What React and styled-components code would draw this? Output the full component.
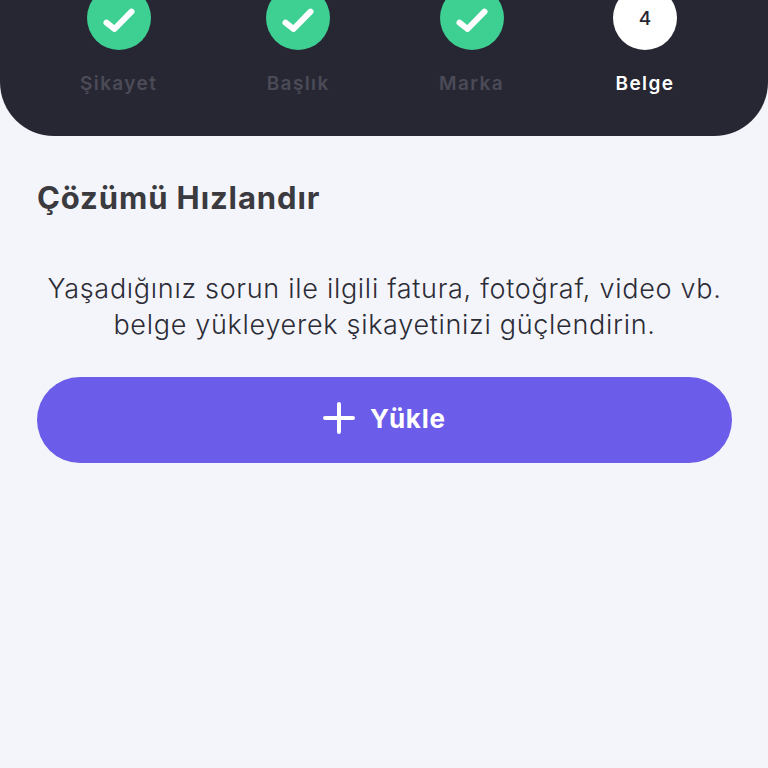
import React from 'react'
import styled, {createGlobalStyle} from 'styled-components'

const GlobalStyle = createGlobalStyle`
    html, body {
        margin: 0;
        padding: 0;
        background: #f4f5fa;
        font-family: 'Inter', 'Liberation Sans', sans-serif;
    }
`

const Page = styled.div`
    width: 768px;
    height: 768px;
    overflow: hidden;
    background: #f4f5fa;
`

const Header = styled.header`
    height: 136px;
    box-sizing: border-box;
    background: #272733;
    border-radius: 0 0 54px 54px;
    overflow: hidden;
    display: flex;
    align-items: flex-end;
    padding: 0 91px 41px 80px;
    justify-content: space-between;
`

const Step = styled.div`
    display: flex;
    flex-direction: column;
    align-items: center;
    gap: 23px;
`

const Circle = styled.div`
    width: 64px;
    height: 64px;
    border-radius: 50%;
    background: ${({$active}) => ($active ? '#ffffff' : '#3ecf92')};
    color: #272733;
    display: flex;
    align-items: center;
    justify-content: center;
    font-size: 19px;
    font-weight: 500;
`

const StepLabel = styled.span`
    font-size: 19px;
    line-height: 22px;
    font-weight: 600;
    letter-spacing: 1.4px;
    color: ${({$active}) => ($active ? '#ffffff' : '#4b4b57')};
`

const Content = styled.main`
    padding: 43px 36px 0 37px;
    display: flex;
    flex-direction: column;
`

const Title = styled.h1`
    margin: 0;
    font-size: 31px;
    line-height: 38px;
    font-weight: 700;
    letter-spacing: 0.9px;
    color: #3a3a3f;
`

const Description = styled.p`
    margin: 54px 0 0;
    font-size: 27px;
    line-height: 36px;
    font-weight: 300;
    letter-spacing: 0.7px;
    text-align: center;
    color: #2c2c36;
`

const UploadButton = styled.button`
    margin-top: 34px;
    height: 86px;
    border: 0;
    border-radius: 43px;
    background: #6b5ce9;
    color: #ffffff;
    display: flex;
    align-items: center;
    justify-content: center;
    gap: 15px;
    padding: 0 0 4px;
    font-family: inherit;
    font-size: 26px;
    font-weight: 700;
    letter-spacing: 0.8px;
`

const Check = () => (
    <svg width="34" height="28" viewBox="0 0 34 28" fill="none">
        <path d="M4.5 18.7L12.5 25L29.5 7.7" stroke="#fff" strokeWidth="6" strokeLinecap="round" strokeLinejoin="round" />
    </svg>
)

const Plus = () => (
    <svg width="32" height="32" viewBox="0 0 32 32" fill="none">
        <path d="M16 2V30M2 16H30" stroke="#fff" strokeWidth="4" strokeLinecap="round" />
    </svg>
)

const steps = [
    {label: 'Şikayet', done: true},
    {label: 'Başlık', done: true},
    {label: 'Marka', done: true},
    {label: 'Belge', number: 4},
]

export default function App() {
    return (
        <Page>
            <GlobalStyle />
            <Header>
                {steps.map((step) => (
                    <Step key={step.label}>
                        <Circle $active={!step.done}>{step.done ? <Check /> : step.number}</Circle>
                        <StepLabel $active={!step.done}>{step.label}</StepLabel>
                    </Step>
                ))}
            </Header>
            <Content>
                <Title>Çözümü Hızlandır</Title>
                <Description>
                    Yaşadığınız sorun ile ilgili fatura, fotoğraf, video vb.
                    <br />
                    belge yükleyerek şikayetinizi güçlendirin.
                </Description>
                <UploadButton>
                    <Plus />
                    Yükle
                </UploadButton>
            </Content>
        </Page>
    )
}
